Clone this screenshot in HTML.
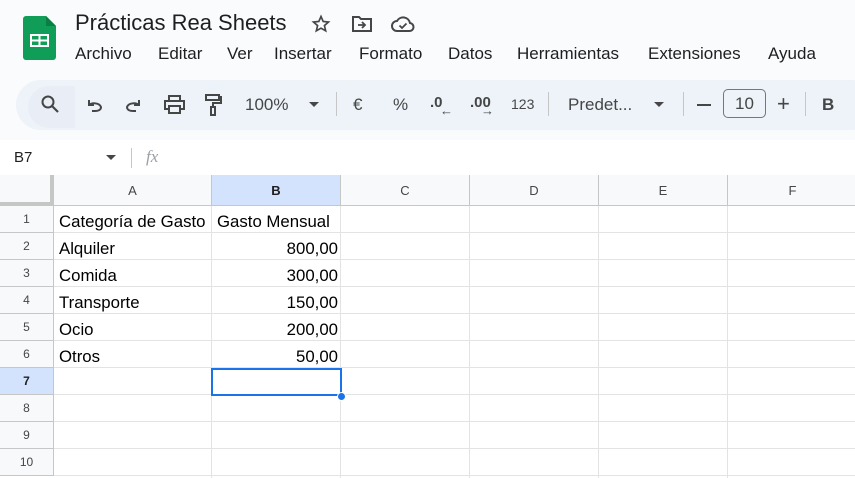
<!DOCTYPE html>
<html><head><meta charset="utf-8"><style>
*{margin:0;padding:0;box-sizing:border-box}
body{width:855px;height:478px;overflow:hidden;background:#f9fbfd;font-family:"Liberation Sans",Arial,sans-serif;position:relative;color:#1f1f1f}
.abs{position:absolute}
.title{left:75px;top:10px;font-size:22px;color:#1f1f1f}
.menu{top:44px;font-size:17px;color:#1f1f1f}
.tb{left:16px;top:80px;width:860px;height:50px;background:#eef2f9;border-radius:25px}
.tt{font-size:17px;color:#444746;top:95px}
.sep{top:92px;width:1px;height:24px;background:#c4c7c5}
.fbar{left:0;top:140px;width:855px;height:36px;background:#fff}
.grid{left:0;top:175px;width:855px;height:303px;background:#fff}
.ch{top:175px;height:31px;background:#f8f9fa;border-right:1px solid #c4c7c5;border-bottom:1px solid #c4c7c5;text-align:center;font-size:13px;line-height:31px;color:#444746}
.rh{left:0;width:54px;height:27px;background:#f8f9fa;border-right:1px solid #c4c7c5;border-bottom:1px solid #c4c7c5;text-align:center;font-size:12px;line-height:27px;color:#444746}
.hl{left:54px;width:801px;height:1px;background:#e2e3e3}
.vl{top:206px;width:1px;height:272px;background:#e2e3e3}
.c{font-size:16.8px;color:#000;line-height:27px;height:27px;margin-top:2px}
.r{text-align:right}
</style></head><body>
<svg class="abs" style="left:23px;top:16px" width="33" height="44" viewBox="0 0 33 44"><path d="M3 0h20l10 10v31a3 3 0 0 1-3 3H3a3 3 0 0 1-3-3V3a3 3 0 0 1 3-3z" fill="#0f9d58"/><path d="M23 0l10 10H23z" fill="#087f43"/><rect x="7" y="18" width="19" height="13" fill="#fff"/><rect x="9" y="20" width="6.5" height="3.5" fill="#0f9d58"/><rect x="17.5" y="20" width="6.5" height="3.5" fill="#0f9d58"/><rect x="9" y="25.5" width="6.5" height="3.5" fill="#0f9d58"/><rect x="17.5" y="25.5" width="6.5" height="3.5" fill="#0f9d58"/></svg>
<div class="abs title">Prácticas Rea Sheets</div>
<svg class="abs" style="left:311px;top:14px" width="20" height="20" viewBox="0 0 24 24"><path d="M12 3l2.6 6 6.4.6-4.9 4.3 1.5 6.3L12 17l-5.6 3.2 1.5-6.3L3 9.6l6.4-.6z" fill="none" stroke="#444746" stroke-width="2"/></svg>
<svg class="abs" style="left:352px;top:15px" width="20" height="18" viewBox="0 0 20 18"><path d="M1 2h6l2 2h10v12H1z" fill="none" stroke="#444746" stroke-width="2"/><path d="M6 10h7M10 7l3 3-3 3" fill="none" stroke="#444746" stroke-width="1.8"/></svg>
<svg class="abs" style="left:391px;top:14px" width="24" height="20" viewBox="0 0 24 20"><path d="M6 17a5 5 0 0 1 0-10 7 7 0 0 1 13 2 4 4 0 0 1-1 8z" fill="none" stroke="#444746" stroke-width="2"/><path d="M8.5 11.5l2.5 2.5 4.5-4.5" fill="none" stroke="#444746" stroke-width="1.8"/></svg>
<div class="abs menu" style="left:75px">Archivo</div>
<div class="abs menu" style="left:158px">Editar</div>
<div class="abs menu" style="left:227px">Ver</div>
<div class="abs menu" style="left:274px">Insertar</div>
<div class="abs menu" style="left:359px">Formato</div>
<div class="abs menu" style="left:448px">Datos</div>
<div class="abs menu" style="left:517px">Herramientas</div>
<div class="abs menu" style="left:648px">Extensiones</div>
<div class="abs menu" style="left:768px">Ayuda</div>
<div class="abs tb"></div>
<div class="abs" style="left:28px;top:86px;width:47px;height:42px;background:#e9eef6;border-radius:21px 0 0 21px"></div>
<svg class="abs" style="left:40px;top:94px" width="20" height="20" viewBox="0 0 20 20"><circle cx="8" cy="8" r="5.5" fill="none" stroke="#444746" stroke-width="2"/><path d="M12 12l6 6" stroke="#444746" stroke-width="2.2"/></svg>
<svg class="abs" style="left:86px;top:97px" width="18" height="16" viewBox="0 0 18 16"><path d="M3 3v5h5M3 8a7 5 0 0 1 12 2c0 3-3 4-6 4H6" fill="none" stroke="#444746" stroke-width="2"/></svg>
<svg class="abs" style="left:124px;top:97px" width="18" height="16" viewBox="0 0 18 16"><path d="M15 3v5h-5M15 8a7 5 0 0 0-12 2c0 3 3 4 6 4h3" fill="none" stroke="#444746" stroke-width="2"/></svg>
<svg class="abs" style="left:164px;top:95px" width="21" height="19" viewBox="0 0 21 19"><path d="M5 6V1h11v5M5 14H1V6h19v8h-4M5 11h11v7H5z" fill="none" stroke="#444746" stroke-width="2"/></svg>
<svg class="abs" style="left:204px;top:93px" width="18" height="23" viewBox="0 0 18 23"><path d="M2 2h13v5H2zM15 4h2v6H9v4M7 14h4v8H7z" fill="none" stroke="#444746" stroke-width="2"/></svg>
<div class="abs tt" style="left:245px">100%</div>
<svg class="abs" style="left:309px;top:102px" width="10" height="6"><path d="M0 0h10L5 5z" fill="#444746"/></svg>
<div class="abs sep" style="left:336px"></div>
<div class="abs tt" style="left:353px">€</div>
<div class="abs tt" style="left:393px">%</div>
<div class="abs" style="left:430px;top:94px;font-size:15px;font-weight:bold;color:#444746">.0</div>
<div class="abs" style="left:440px;top:103px;font-size:13px;color:#444746">←</div>
<div class="abs" style="left:470px;top:94px;font-size:15px;font-weight:bold;color:#444746">.00</div>
<div class="abs" style="left:481px;top:103px;font-size:13px;color:#444746">→</div>
<div class="abs" style="left:511px;top:96px;font-size:14px;color:#444746">123</div>
<div class="abs sep" style="left:548px"></div>
<div class="abs tt" style="left:568px">Predet...</div>
<svg class="abs" style="left:654px;top:102px" width="10" height="6"><path d="M0 0h10L5 5z" fill="#444746"/></svg>
<div class="abs sep" style="left:683px"></div>
<div class="abs" style="left:697px;top:104px;width:14px;height:2px;background:#444746"></div>
<div class="abs" style="left:723px;top:89px;width:43px;height:29px;border:1px solid #747775;border-radius:5px;text-align:center;line-height:27px;font-size:17px;color:#444746">10</div>
<div class="abs" style="left:777px;top:94px;font-size:22px;color:#444746;line-height:20px">+</div>
<div class="abs sep" style="left:805px"></div>
<div class="abs" style="left:822px;top:95px;font-size:17px;font-weight:bold;color:#444746">B</div>
<div class="abs fbar"></div>
<div class="abs" style="left:14px;top:149px;font-size:15px">B7</div>
<svg class="abs" style="left:106px;top:155px" width="10" height="6"><path d="M0 0h10L5 5z" fill="#444746"/></svg>
<div class="abs" style="left:131px;top:148px;width:1px;height:20px;background:#c4c7c5"></div>
<div class="abs" style="left:146px;top:147px;font-size:17px;font-style:italic;font-family:'Liberation Serif',serif;color:#9aa0a6">fx</div>
<div class="abs grid"></div>
<div class="abs ch" style="left:0;width:54px;border-right:4px solid #c4c7c5;border-bottom:4px solid #c4c7c5"></div>
<div class="abs ch" style="left:54px;width:158px">A</div>
<div class="abs ch" style="left:212px;width:129px;background:#d3e3fd;font-weight:bold;color:#1f1f1f">B</div>
<div class="abs ch" style="left:341px;width:129px">C</div>
<div class="abs ch" style="left:470px;width:129px">D</div>
<div class="abs ch" style="left:599px;width:129px">E</div>
<div class="abs ch" style="left:728px;width:130px">F</div>
<div class="abs rh" style="top:206px">1</div>
<div class="abs rh" style="top:233px">2</div>
<div class="abs rh" style="top:260px">3</div>
<div class="abs rh" style="top:287px">4</div>
<div class="abs rh" style="top:314px">5</div>
<div class="abs rh" style="top:341px">6</div>
<div class="abs rh" style="top:368px;background:#d3e3fd;font-weight:bold;color:#1f1f1f">7</div>
<div class="abs rh" style="top:395px">8</div>
<div class="abs rh" style="top:422px">9</div>
<div class="abs rh" style="top:449px">10</div>
<div class="abs hl" style="top:232px"></div><div class="abs hl" style="top:259px"></div><div class="abs hl" style="top:286px"></div><div class="abs hl" style="top:313px"></div><div class="abs hl" style="top:340px"></div><div class="abs hl" style="top:367px"></div><div class="abs hl" style="top:394px"></div><div class="abs hl" style="top:421px"></div><div class="abs hl" style="top:448px"></div><div class="abs hl" style="top:475px"></div>
<div class="abs vl" style="left:211px"></div><div class="abs vl" style="left:340px"></div><div class="abs vl" style="left:469px"></div><div class="abs vl" style="left:598px"></div><div class="abs vl" style="left:727px"></div>
<div class="abs c" style="left:59px;top:206px">Categoría de Gasto</div>
<div class="abs c" style="left:217px;top:206px">Gasto Mensual</div>
<div class="abs c" style="left:59px;top:233px">Alquiler</div>
<div class="abs c" style="left:59px;top:260px">Comida</div>
<div class="abs c" style="left:59px;top:287px">Transporte</div>
<div class="abs c" style="left:59px;top:314px">Ocio</div>
<div class="abs c" style="left:59px;top:341px">Otros</div>
<div class="abs c r" style="left:212px;width:126px;top:233px">800,00</div>
<div class="abs c r" style="left:212px;width:126px;top:260px">300,00</div>
<div class="abs c r" style="left:212px;width:126px;top:287px">150,00</div>
<div class="abs c r" style="left:212px;width:126px;top:314px">200,00</div>
<div class="abs c r" style="left:212px;width:126px;top:341px">50,00</div>
<div class="abs" style="left:211px;top:368px;width:131px;height:28px;border:2px solid #1a73e8"></div>
<div class="abs" style="left:337px;top:392px;width:9px;height:9px;border-radius:50%;background:#1a73e8;border:1px solid #fff"></div>
</body></html>
